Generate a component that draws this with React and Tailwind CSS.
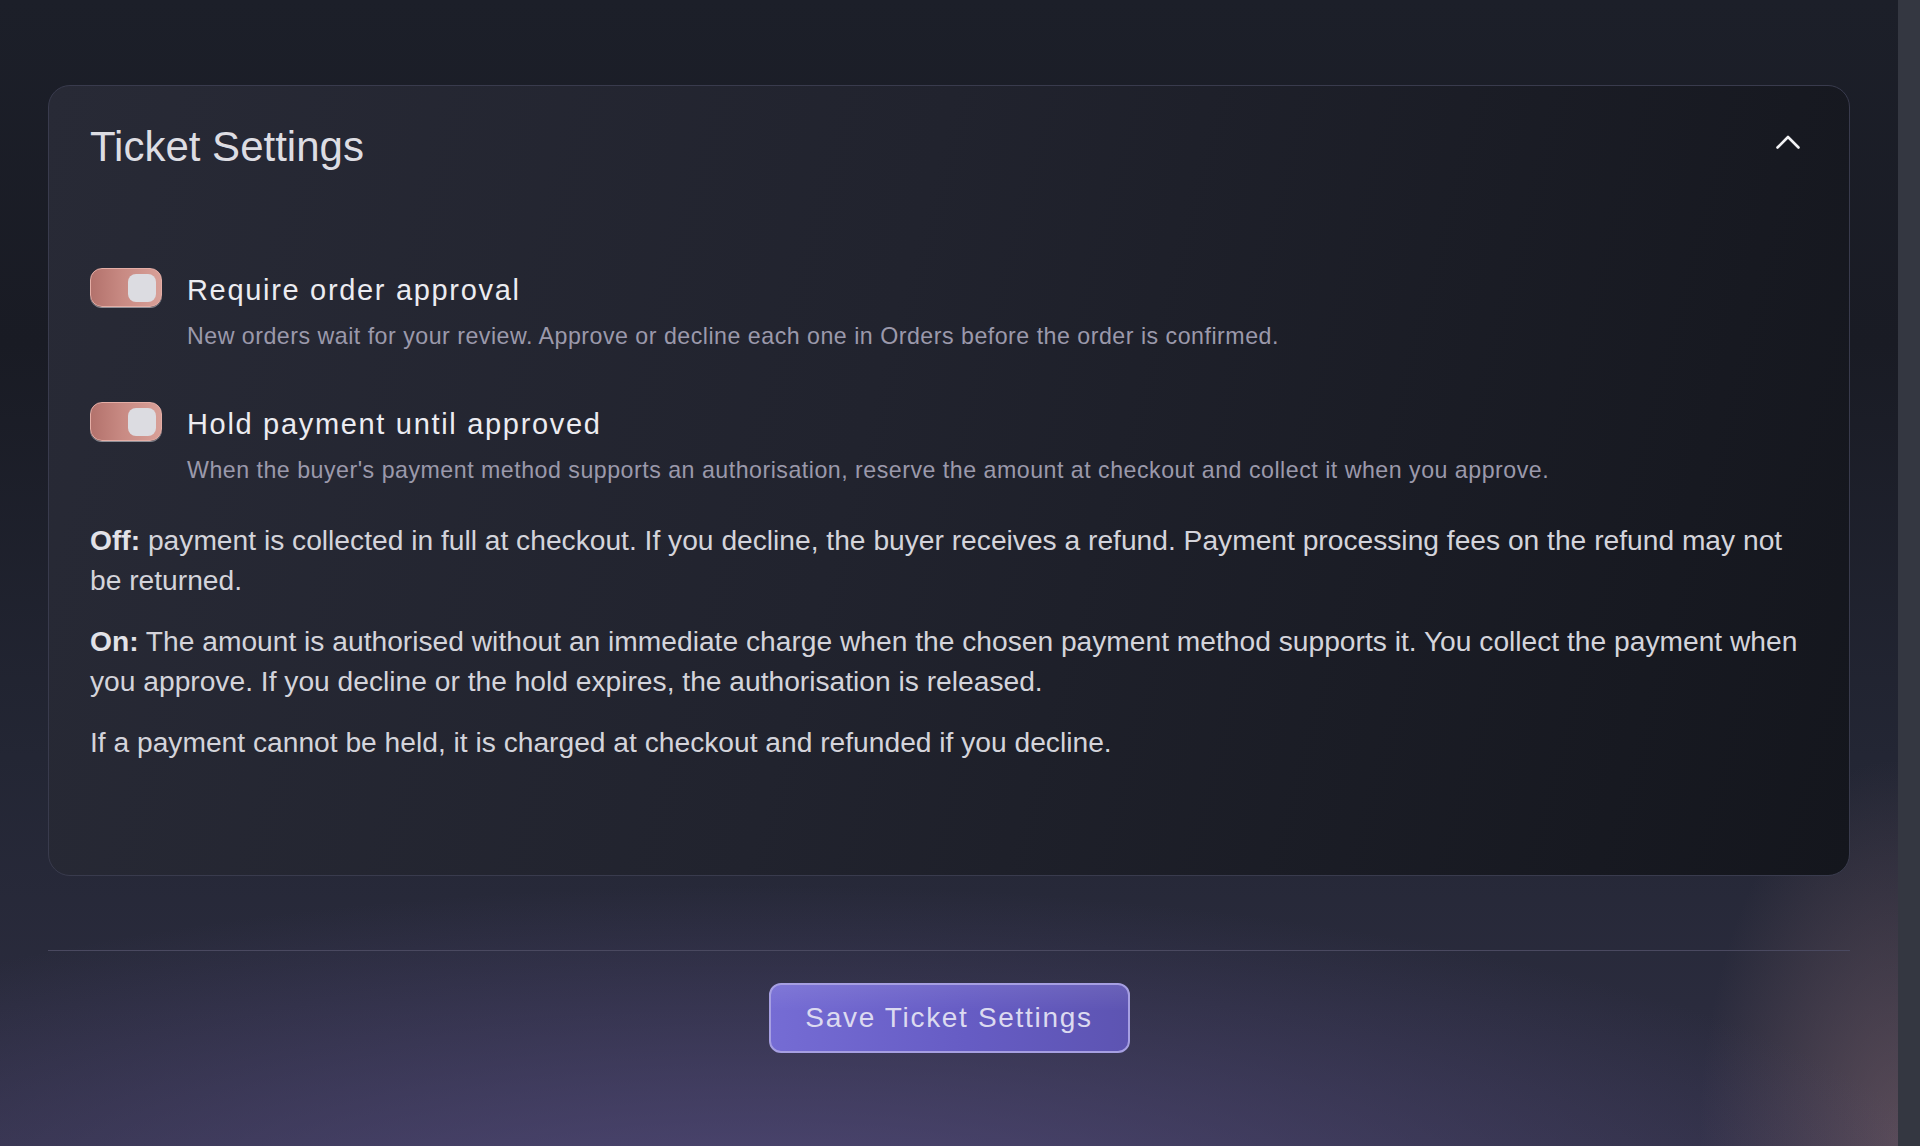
import { useState } from "react";

// Small pill switch used for the ticket options.
function Switch({ checked, onChange }) {
  return (
    <button
      type="button"
      role="switch"
      aria-checked={checked}
      onClick={() => onChange(!checked)}
      className={
        checked
          ? "flex h-[39px] w-[72px] shrink-0 items-center justify-end rounded-[12px] border border-[#e4aea6] bg-[linear-gradient(90deg,#b3726c_0%,#c88a83_45%,#d8a098_100%)] pr-[5px] shadow-[0_1px_0_#8e8e96]"
          : "flex h-[39px] w-[72px] shrink-0 items-center justify-start rounded-[12px] border border-[#4a4c5c] bg-[#2c2f3b] pl-[5px]"
      }
    >
      <span className="h-[28px] w-[28px] rounded-[8px] bg-[#dcdce1]" />
    </button>
  );
}

function ToggleRow({ label, hint, checked, onChange }) {
  return (
    <div className="flex flex-col">
      <div className="flex items-start gap-[25px]">
        <Switch checked={checked} onChange={onChange} />
        <span className="mt-[3px] text-[29px] leading-[39px] tracking-[0.058em] text-[#ececf1]">
          {label}
        </span>
      </div>
      <p className="mt-[10px] pl-[97px] text-[23.2px] leading-[32px] tracking-[0.5px] text-[#9b99ab]">
        {hint}
      </p>
    </div>
  );
}

export default function App() {
  const [open, setOpen] = useState(true);
  const [requireApproval, setRequireApproval] = useState(true);
  const [holdPayment, setHoldPayment] = useState(true);

  return (
    <div className="flex min-h-[1146px] w-full font-['Liberation_Sans',Arial,sans-serif]">
      <main className="flex flex-1 flex-col bg-[radial-gradient(ellipse_85%_42%_at_40%_110%,rgba(92,82,138,0.8),transparent_78%),radial-gradient(ellipse_14%_45%_at_100%_100%,rgba(132,104,110,0.5),transparent_75%),linear-gradient(180deg,#1c1f29_0%,#191b24_30%,#232634_66%,#2e2e42_100%)] px-[48px] pt-[85px]">
        <section className="rounded-[22px] border-[1.5px] border-[#393b4d] bg-[linear-gradient(105deg,#282a36_0%,#21232e_45%,#14161d_100%)] pb-[113px] pl-[41px] pr-[34px] pt-[36px]">
          <div className="flex items-center justify-between">
            <h2 className="text-[42px] leading-[50px] text-[#dddde3]">
              Ticket Settings
            </h2>
            <button
              type="button"
              aria-label="Collapse"
              onClick={() => setOpen(!open)}
              className="mb-[10px] mr-[15px] text-[#f2f2f5]"
            >
              <svg width="24" height="14" viewBox="0 0 24 14" fill="none">
                <path
                  d={open ? "M1.5 12.5 12 2l10.5 10.5" : "M1.5 1.5 12 12 22.5 1.5"}
                  stroke="currentColor"
                  strokeWidth="2.6"
                  strokeLinecap="round"
                  strokeLinejoin="round"
                />
              </svg>
            </button>
          </div>

          {open && (
            <div className="mt-[96px] flex flex-col">
              <ToggleRow
                label="Require order approval"
                hint="New orders wait for your review. Approve or decline each one in Orders before the order is confirmed."
                checked={requireApproval}
                onChange={setRequireApproval}
              />
              <div className="mt-[50px]">
                <ToggleRow
                  label="Hold payment until approved"
                  hint="When the buyer's payment method supports an authorisation, reserve the amount at checkout and collect it when you approve."
                  checked={holdPayment}
                  onChange={setHoldPayment}
                />
              </div>

              <div className="mt-[34px] flex flex-col gap-[21px] text-[28.2px] leading-[40px] text-[#d4d4db]">
                <p>
                  <strong className="font-bold text-[#e2e2e8]">Off:</strong>{" "}
                  payment is collected in full at checkout. If you decline, the
                  buyer receives a refund. Payment processing fees on the refund
                  may not be returned.
                </p>
                <p>
                  <strong className="font-bold text-[#e2e2e8]">On:</strong> The
                  amount is authorised without an immediate charge when the
                  chosen payment method supports it. You collect the payment
                  when you approve. If you decline or the hold expires, the
                  authorisation is released.
                </p>
                <p>
                  If a payment cannot be held, it is charged at checkout and
                  refunded if you decline.
                </p>
              </div>
            </div>
          )}
        </section>

        <div className="mt-[74px] h-px bg-[#4a4960]" />

        <div className="mt-[32px] flex justify-center">
          <button
            type="button"
            className="flex h-[70px] w-[361px] items-center justify-center rounded-[12px] border-2 border-[#a69fe2] bg-[linear-gradient(180deg,rgba(255,255,255,0.08),transparent_40%),linear-gradient(90deg,#756cd4_0%,#665cc4_55%,#5d54b2_100%)] text-[28px] tracking-[0.06em] text-[#dcdaf0]"
          >
            Save Ticket Settings
          </button>
        </div>
      </main>
      <div className="w-[22px] shrink-0 bg-[#343741]" />
    </div>
  );
}
